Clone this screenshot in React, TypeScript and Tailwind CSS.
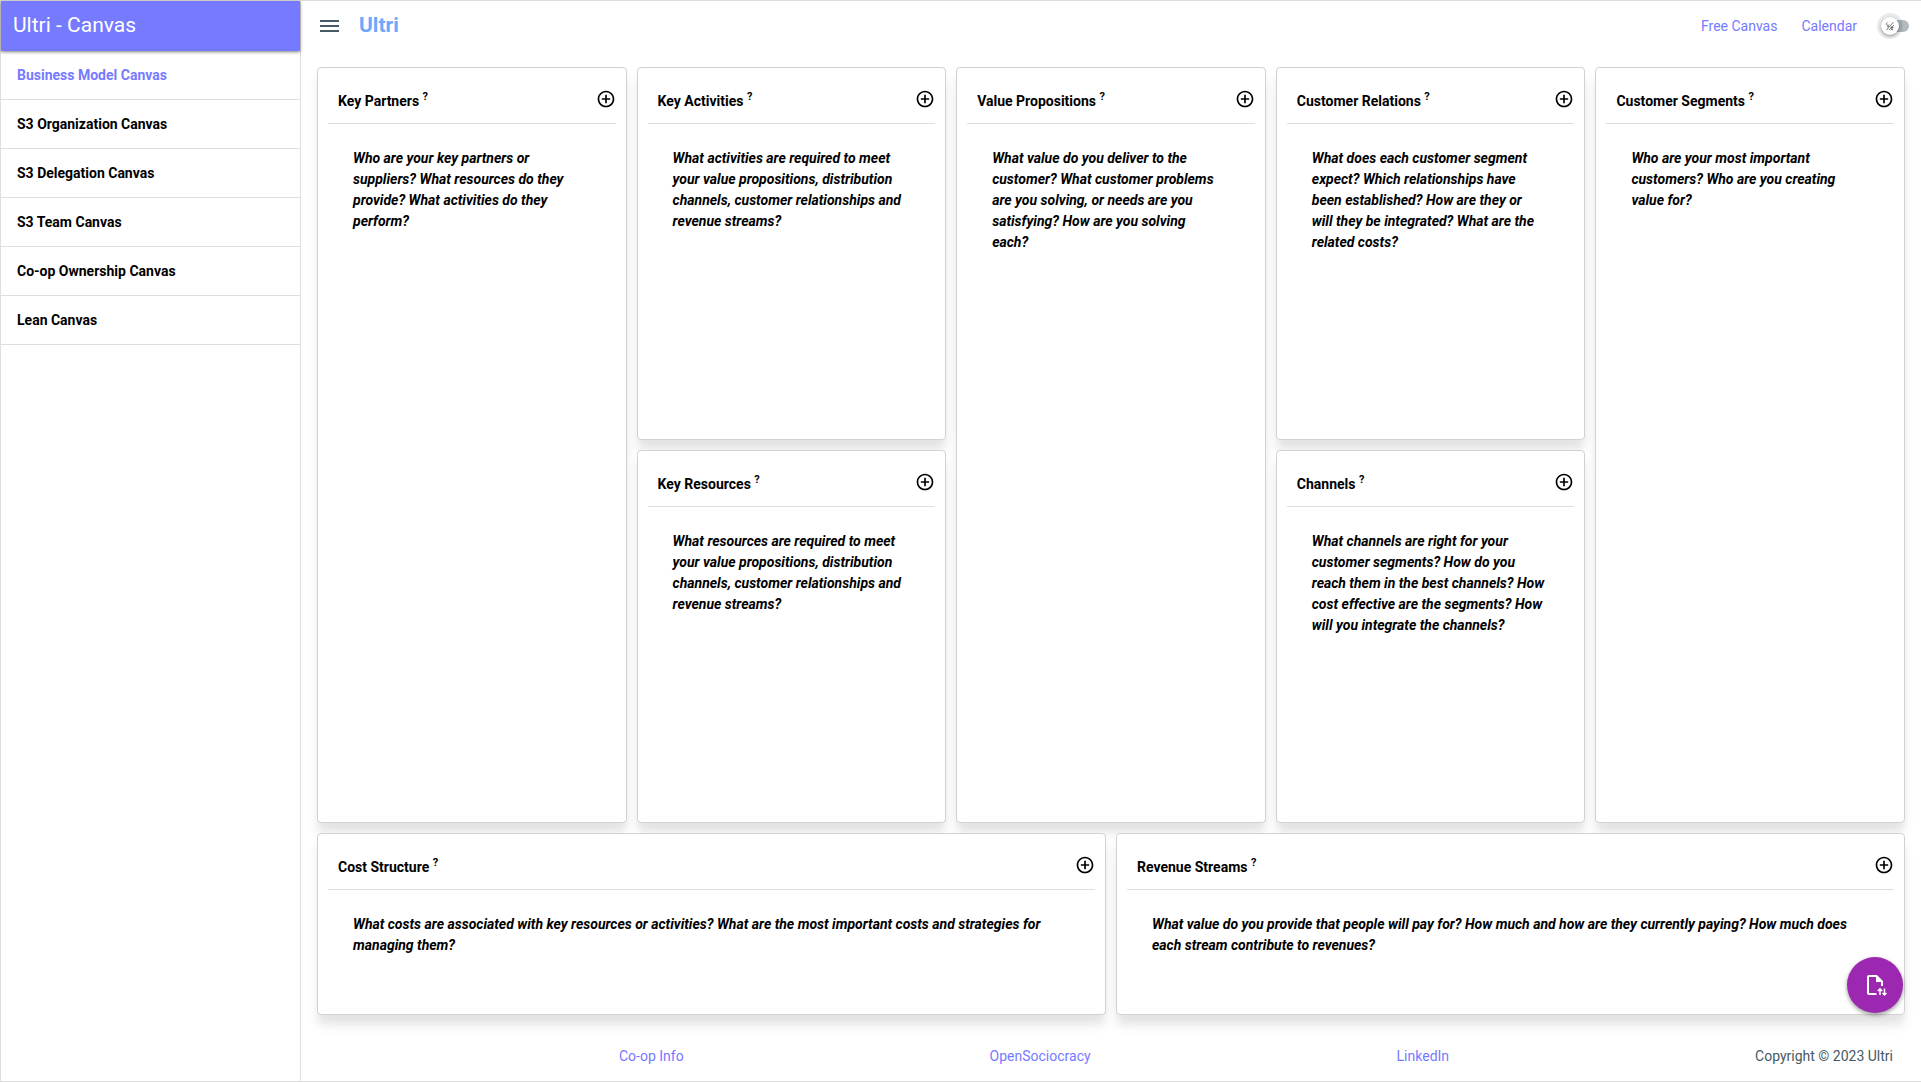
import { useState } from "react";

type Block = { title: string; help: string; area: string };

const canvases = [
  "Business Model Canvas",
  "S3 Organization Canvas",
  "S3 Delegation Canvas",
  "S3 Team Canvas",
  "Co-op Ownership Canvas",
  "Lean Canvas",
];

const blocks: Block[] = [
  {
    title: "Key Partners",
    help: "Who are your key partners or suppliers? What resources do they provide? What activities do they perform?",
    area: "col-span-2 row-span-2",
  },
  {
    title: "Key Activities",
    help: "What activities are required to meet your value propositions, distribution channels, customer relationships and revenue streams?",
    area: "col-span-2",
  },
  {
    title: "Value Propositions",
    help: "What value do you deliver to the customer? What customer problems are you solving, or needs are you satisfying? How are you solving\neach?",
    area: "col-span-2 row-span-2",
  },
  {
    title: "Customer Relations",
    help: "What does each customer segment expect? Which relationships have\nbeen established? How are they or\nwill they be integrated? What are the\nrelated costs?",
    area: "col-span-2",
  },
  {
    title: "Customer Segments",
    help: "Who are your most important customers? Who are you creating value for?",
    area: "col-span-2 row-span-2",
  },
  {
    title: "Key Resources",
    help: "What resources are required to meet your value propositions, distribution channels, customer relationships and revenue streams?",
    area: "col-span-2",
  },
  {
    title: "Channels",
    help: "What channels are right for your customer segments? How do you reach them in the best channels? How cost effective are the segments? How will you integrate the channels?",
    area: "col-span-2",
  },
  {
    title: "Cost Structure",
    help: "What costs are associated with key resources or activities? What are the most important costs and strategies for managing them?",
    area: "col-span-5",
  },
  {
    title: "Revenue Streams",
    help: "What value do you provide that people will pay for? How much and how are they currently paying? How much does each stream contribute to revenues?",
    area: "col-span-5",
  },
];

function PlusCircle() {
  return (
    <svg viewBox="0 0 24 24" className="size-5" fill="currentColor" aria-hidden="true">
      <path d="M13 7h-2v4H7v2h4v4h2v-4h4v-2h-4V7zm-1-5C6.480 2 2 6.480 2 12s4.480 10 10 10 10-4.480 10-10S17.520 2 12 2zm0 18c-4.410 0-8-3.590-8-8s3.590-8 8-8 8 3.590 8 8-3.590 8-8 8z" />
    </svg>
  );
}

function Card({ title, help, area }: Block) {
  return (
    <section
      className={`${area} flex flex-col rounded border border-[#d2d2d2] bg-white px-2.5 shadow-[0_10px_8px_-1px_rgba(0,0,0,0.08),0_12px_16px_0px_rgba(0,0,0,0.04)]`}
    >
      <header className="flex h-14 items-center justify-between border-b border-[#dedede] pt-2 pl-2.5">
        <h2 className="pt-0.5 text-sm font-bold">
          {title} <sup className="text-[11px]">?</sup>
        </h2>
        <button type="button" aria-label={`Add to ${title}`} className="pb-0.5">
          <PlusCircle />
        </button>
      </header>
      <p className="py-6 pr-6 pl-[25px] text-sm leading-[21px] font-bold whitespace-pre-line italic">{help}</p>
    </section>
  );
}

function ThemeSwitch() {
  const [on, setOn] = useState(false);
  return (
    <label className="relative flex h-5 w-7 items-center">
      <input
        type="checkbox"
        role="switch"
        aria-label="Dark mode"
        checked={on}
        onChange={() => setOn(!on)}
        className="peer ml-1 h-3 w-6 appearance-none rounded-full bg-[#b0babf]"
      />
      <span className="pointer-events-none absolute left-0 flex size-[18px] items-center justify-center rounded-full bg-white shadow-[0_1px_3px_rgba(0,0,0,0.4),0_0_0_4px_rgba(0,0,0,0.08)] peer-checked:left-3">
        <svg viewBox="0 0 10 10" className="size-2.5" fill="none" stroke="#555" strokeWidth="0.8" aria-hidden="true">
          <path d="M2.500 1.500a1.500 1.500 0 1 0 1.800 2.200M1.500 9l7-8M4 9l5-5M5.500 6.500h3M6 8l2 1M2 6l2-1M7 5v4" />
        </svg>
      </span>
    </label>
  );
}

export default function App() {
  const [active, setActive] = useState(canvases[0]);
  return (
    <div className="flex min-h-screen border-t border-b border-l border-[#dedede] bg-white font-['Roboto',sans-serif] text-sm text-black">
      <aside className="w-[300px] shrink-0 border-r border-[#dedede]">
        <h1 className="flex h-[50px] items-center bg-[#757aff] px-3 pb-0.5 text-[21px] text-white shadow-[0_1px_3px_rgba(0,0,0,0.5)]">
          Ultri - Canvas
        </h1>
        <nav>
          {canvases.map((name) => (
            <a
              key={name}
              href="#"
              onClick={() => setActive(name)}
              className={`flex h-[49px] items-center border-b border-[#dedede] px-4 font-bold ${name === active ? "text-[#757aff]" : ""}`}
            >
              {name}
            </a>
          ))}
        </nav>
      </aside>

      <div className="flex min-w-0 grow flex-col">
        <header className="flex h-[50px] items-center pr-3 pl-[19px]">
          <button type="button" aria-label="Menu" className="text-[#455a64]">
            <svg viewBox="0 0 20 14" className="h-3.5 w-5" fill="currentColor" aria-hidden="true">
              <path d="M0 1h19v2H0zM0 6h19v2H0zM0 11h19v2H0z" />
            </svg>
          </button>
          <span className="ml-[19px] pb-0.5 text-[21px] font-bold text-[#6da8fb]">Ultri</span>
          <nav className="ml-auto flex gap-6 text-[#757aff]">
            <a href="#">Free Canvas</a>
            <a href="#">Calendar</a>
          </nav>
          <div className="ml-6">
            <ThemeSwitch />
          </div>
        </header>

        <main className="relative grid grow grid-cols-10 grid-rows-[41fr_41fr_20fr] gap-2.5 p-4">
          {blocks.map((block) => (
            <Card key={block.title} {...block} />
          ))}
          <button
            type="button"
            aria-label="Import or export"
            className="absolute right-[18px] bottom-[18px] flex size-14 items-center justify-center rounded-full bg-[#9c27b0] text-white shadow-[0_2px_4px_rgba(0,0,0,0.4)]"
          >
            <svg viewBox="0 0 24 24" className="size-6" aria-hidden="true">
              <path d="M13.500 21H6a1 1 0 0 1-1-1V4a1 1 0 0 1 1-1h7.500L19 8.500V13" fill="none" stroke="currentColor" strokeWidth="2" />
              <path d="M13 2v7h7z" fill="currentColor" />
              <path d="M17 22v-6M14.800 18l2.200-2.200 2.200 2.200M21.500 15.500v6M19.500 20l2 2 2-2" fill="none" stroke="currentColor" strokeWidth="1.500" />
            </svg>
          </button>
        </main>

        <footer className="flex h-[50px] items-center justify-between pr-7 pl-3">
          <span />
          <a href="#" className="text-[#757aff]">Co-op Info</a>
          <a href="#" className="text-[#757aff]">OpenSociocracy</a>
          <a href="#" className="text-[#757aff]">LinkedIn</a>
          <span className="text-[#455a64]">Copyright © 2023 Ultri</span>
        </footer>
      </div>
    </div>
  );
}
